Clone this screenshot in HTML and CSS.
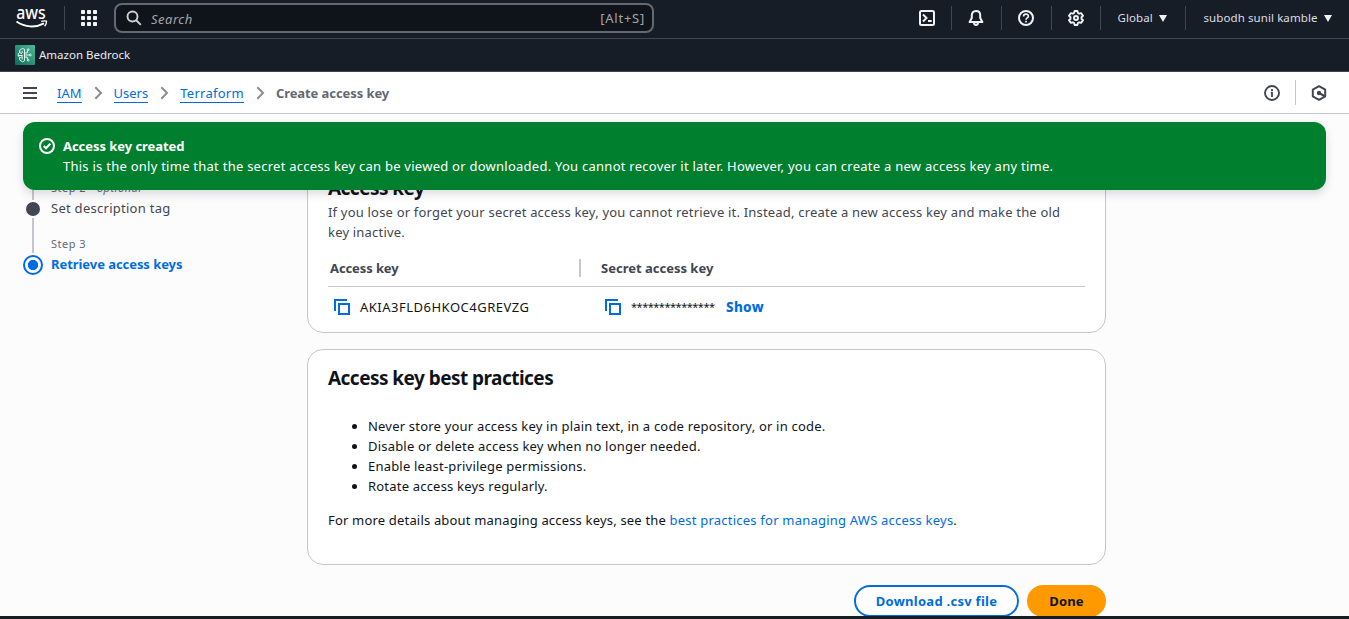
FILE: index.html
```html
<!DOCTYPE html>
<html lang="en">
<head>
<meta charset="utf-8">
<title>Create access key | IAM</title>
<link rel="stylesheet" href="styles.css">
</head>
<body>
<div class="app">
  <header class="topbar">
    <svg class="logo" width="32" height="28" viewBox="0 -8 32 28">
      <text x="0.3" y="11" class="logo-text" textLength="29.5" lengthAdjust="spacingAndGlyphs">aws</text>
      <path d="M.5 13.6c8.500 6.200 19.500 6.200 27.500 1.800" fill="none" stroke="#fff" stroke-width="1.800"/>
      <path d="M25.200 13.400q3.500-1 5.300-.2q.2 2.600-1.900 5" fill="none" stroke="#fff" stroke-width="1.400"/>
    </svg>
    <span class="sep sep-logo"></span>
    <svg class="grid-icon" width="16" height="16" viewBox="0 0 16 16" fill="#f3f3f7">
      <rect width="4" height="4" rx=".8"/><rect x="6" width="4" height="4" rx=".8"/><rect x="12" width="4" height="4" rx=".8"/>
      <rect y="6" width="4" height="4" rx=".8"/><rect x="6" y="6" width="4" height="4" rx=".8"/><rect x="12" y="6" width="4" height="4" rx=".8"/>
      <rect y="12" width="4" height="4" rx=".8"/><rect x="6" y="12" width="4" height="4" rx=".8"/><rect x="12" y="12" width="4" height="4" rx=".8"/>
    </svg>
    <div class="search">
      <svg width="16" height="16" viewBox="0 0 16 16" fill="none" stroke="#d0d0d6" stroke-width="1.900"><circle cx="6.500" cy="6.500" r="5"/><path d="m10 10 4.800 4.800"/></svg>
      <span class="search-hint">Search</span>
      <span class="search-key">[Alt+S]</span>
    </div>
    <div class="tools">
      <span class="tool tool-shell"><svg width="16" height="16" viewBox="0 0 16 16" fill="none" stroke="#f3f3f7" stroke-width="2"><rect x="1" y="1" width="14" height="14" rx="1.500"/><path d="m4 4.500 3.500 3.500L4 11.500M9 11h3.700"/></svg></span>
      <span class="tool tool-bell"><svg width="16" height="16" viewBox="0 0 16 16" fill="none" stroke="#f3f3f7" stroke-width="2" stroke-linejoin="round"><path d="M8 1C5.200 1 3.800 3 3.800 5.300V8L1.600 12h12.800L12.200 8V5.300C12.200 3 10.800 1 8 1ZM6 12.500c0 3.200 4 3.200 4 0"/></svg></span>
      <span class="tool tool-help"><svg width="16" height="16" viewBox="0 0 16 16" fill="none" stroke="#f3f3f7" stroke-width="2"><circle cx="8" cy="8" r="7"/><path d="M5.600 6.400C5.600 3.400 10.400 3.400 10.400 6.200 10.400 8 8 7.800 8 9.700M8 10.800v1.800" stroke-width="1.700"/></svg></span>
      <span class="tool tool-gear"><svg width="16" height="16" viewBox="0 0 16 16" fill="none" stroke="#f3f3f7" stroke-width="1.900" stroke-linejoin="round"><path d="M6.600 1h2.800l.5 2 1.200.7 2-.6 1.900 2.700L13.500 7.200v1.600l1.500 1.400-1.900 2.700-2-.6-1.200.7-.5 2H6.600l-.5-2-1.200-.7-2 .6L1 10.200l1.500-1.400V7.200L1 5.800l1.900-2.700 2 .6L6.100 3Z"/><circle cx="8" cy="8" r="2"/></svg></span>
      <span class="tool tool-region"><span class="t-region">Global</span><i class="caret"></i></span>
      <span class="tool tool-user"><span class="t-user">subodh sunil kamble</span><i class="caret"></i></span>
    </div>
  </header>
  <div class="favorites">
    <svg class="bedrock" width="20" height="20" viewBox="0 0 20 20">
      <defs><linearGradient id="teal" x1="0" y1="1" x2="1" y2="0"><stop stop-color="#0b6b58"/><stop offset="1" stop-color="#4fb99a"/></linearGradient></defs>
      <rect width="20" height="20" rx="1" fill="url(#teal)"/>
      <g fill="none" stroke="#e4f6ef" stroke-width="1"><path d="M9.500 4.200v11.600l-2 1-2.800-1.900v-2.500L3.200 11V8.800l1.500-1.200V5.300L7.300 3.500ZM4.800 7.600l2.200 1M3.500 10.500h4.200M7.200 6.300V8M5.100 13l2.100-1.500v3M9.500 10h5.300M9.500 8h2.800V5.500M9.500 12h2.800v2.500"/><circle cx="15.300" cy="10" r=".9"/><circle cx="13.200" cy="4.700" r=".9"/><circle cx="13.200" cy="15.200" r=".9"/></g>
    </svg>
    <span class="t-bedrock">Amazon Bedrock</span>
  </div>
  <nav class="crumbs">
    <svg class="menu" width="14" height="12" viewBox="0 0 14 12" fill="#424650"><path d="M0 0h14v2H0zM0 5h14v2H0zM0 10h14v2H0z"/></svg>
    <a class="c1">IAM</a>
    <svg class="chev" width="9" height="14" viewBox="0 0 9 14"><path d="m1.300 1.200 5.700 5.800-5.700 5.800"/></svg>
    <a class="c2">Users</a>
    <svg class="chev" width="9" height="14" viewBox="0 0 9 14"><path d="m1.300 1.200 5.700 5.800-5.700 5.800"/></svg>
    <a class="c3">Terraform</a>
    <svg class="chev" width="9" height="14" viewBox="0 0 9 14"><path d="m1.300 1.200 5.700 5.800-5.700 5.800"/></svg>
    <b class="c4">Create access key</b>
    <div class="crumb-tools">
      <svg width="16" height="16" viewBox="0 0 16 16" fill="none" stroke="#424650" stroke-width="1.900"><circle cx="8" cy="8" r="7"/><path d="M8 4v2M6.800 7.700H8V12" stroke-width="1.800"/></svg>
      <span class="crumb-sep"></span>
      <svg width="16" height="16" viewBox="0 0 16 16" fill="none" stroke="#424650" stroke-width="2"><path d="m8 1.200 6.200 3.500v6.600L8 14.800l-6.200-3.500V4.700Z" stroke-linejoin="round"/><path d="m8 8 5.500 3"/><circle cx="8" cy="8" r="1.200" fill="#424650"/></svg>
    </div>
  </nav>
  <main class="content">
    <aside class="steps">
      <div class="rail"><i class="line l-top"></i><i class="dot"></i><i class="line l-mid"></i><i class="dot-now"></i></div>
      <div class="step-list">
        <small class="s-opt">Step 2 - <em>optional</em></small>
        <span class="s-tag">Set description tag</span>
        <small class="s-three">Step 3</small>
        <b class="s-now">Retrieve access keys</b>
      </div>
    </aside>
    <div class="panels">
      <section class="card card-key">
        <h2 class="h-key">Access key</h2>
        <p class="desc"><span class="d1">If you lose or forget your secret access key, you cannot retrieve it. Instead, create a new access key and make the old</span><br><span class="d2">key inactive.</span></p>
        <div class="table">
          <div class="row head"><b class="th1">Access key</b><i class="col-sep"></i><b class="th2">Secret access key</b></div>
          <div class="row data">
            <svg class="copy" width="16" height="16" viewBox="0 0 16 16" fill="none" stroke="#006ce0" stroke-width="2"><path d="M1 12V1h12"/><path d="M5 5h10v10H5z"/></svg>
            <span class="td1">AKIA3FLD6HKOC4GREVZG</span>
            <svg class="copy copy-b" width="16" height="16" viewBox="0 0 16 16" fill="none" stroke="#006ce0" stroke-width="2"><path d="M1 12V1h12"/><path d="M5 5h10v10H5z"/></svg>
            <span class="td2">***************</span>
            <b class="show">Show</b>
          </div>
        </div>
      </section>
      <section class="card card-best">
        <h2 class="h-best">Access key best practices</h2>
        <ul class="tips">
          <li><span class="li1">Never store your access key in plain text, in a code repository, or in code.</span></li>
          <li><span class="li2">Disable or delete access key when no longer needed.</span></li>
          <li><span class="li3">Enable least-privilege permissions.</span></li>
          <li><span class="li4">Rotate access keys regularly.</span></li>
        </ul>
        <p class="more"><span class="m1">For more details about managing access keys, see the </span><a class="m2">best practices for managing AWS access keys</a>.</p>
      </section>
      <div class="actions"><span class="btn btn-csv">Download .csv file</span><span class="btn btn-done">Done</span></div>
    </div>
    <div class="flash">
      <svg width="16" height="16" viewBox="0 0 16 16" fill="none" stroke="#fff" stroke-width="2"><circle cx="8" cy="8" r="7"/><path d="m4.700 8 2.300 2.300 4.300-4.500"/></svg>
      <div class="flash-text"><b class="f1">Access key created</b><span class="f2">This is the only time that the secret access key can be viewed or downloaded. You cannot recover it later. However, you can create a new access key any time.</span></div>
    </div>
  </main>
  <footer class="bottom"></footer>
</div>
</body>
</html>
```
FILE: styles.css
```css
* { box-sizing: border-box; }
body { margin: 0; font: 13px/20px "Noto Sans", sans-serif; color: #0f141a; background: #fcfcfd; }
svg { flex: none; display: block; }
span, b, a, small, h2 { white-space: nowrap; }
.app { width: 1349px; height: 619px; display: flex; flex-direction: column; overflow: hidden; }
.topbar { height: 39px; flex: none; background: #161d26; border-bottom: 1px solid #424650; display: flex; align-items: flex-start; color: #dedee3; }
.logo { margin-left: 16px; overflow: visible; }
.logo-text { font: 500 18px "Noto Sans", sans-serif; fill: #fff; }
.sep { width: 1px; height: 24px; background: #424650; margin: 6px 0 0 16px; }
.grid-icon { margin: 10px 0 0 16px; }
.search { width: 540px; height: 30px; margin: 3px 0 0 17px; border: 2px solid #656871; border-radius: 8px; background: #0f141a; display: flex; align-items: center; padding: 0 7px 0 10px; }
.search-hint { margin-left: 9px; padding-top: 2px; font-style: italic; letter-spacing: .5px; color: #a4a4ad; }
.search-key { margin-left: auto; letter-spacing: .75px; color: #a4a4ad; }
.tools { margin-left: auto; display: flex; padding-top: 6px; }
.tool { height: 24px; display: flex; align-items: center; font-size: 11.5px; }
.tool + .tool { border-left: 1px solid #424650; }
.tool-shell { width: 32px; }
.tool-bell, .tool-help { width: 50px; padding-left: 16px; }
.tool-gear { width: 49px; padding-left: 16px; }
.tool-region { width: 85px; padding-left: 16.500px; }
.t-region { letter-spacing: .1px; }
.tool-user { width: 164px; padding-left: 17.500px; }
.t-user { letter-spacing: .09px; }
.caret { border: 4px solid transparent; border-top: 7px solid #f3f3f7; border-bottom: 0; margin-left: 6px; }
.favorites { height: 33px; flex: none; background: #161d26; border-bottom: 1px solid #424650; display: flex; align-items: center; padding-left: 15px; color: #ebebf0; font-size: 11.5px; }
.t-bedrock { margin-left: 4px; padding-bottom: 1px; }
.crumbs { height: 42px; flex: none; background: #fff; border-bottom: 1px solid #c6c6cd; display: flex; align-items: center; padding: 0 22px 0 23px; }
.menu { margin-right: 20px; }
.crumbs a { color: #006ce0; border-bottom: 1px solid #006ce0; line-height: 18px; padding-top: 2px; }
.c3 { letter-spacing: .27px; }
.chev { margin: 0 11px 0 12px; fill: none; stroke: #8c8c94; stroke-width: 2; }
.c4 { color: #656871; letter-spacing: -.08px; }
.crumb-tools { margin-left: auto; display: flex; align-items: center; }
.crumb-sep { width: 1px; height: 25px; margin: 0 15px; background: #c6c6cd; }
.content { position: relative; flex: 1; min-height: 0; overflow: hidden; display: flex; align-items: flex-start; padding: 54px 0 0 23px; }
.steps { display: flex; width: 284px; flex: none; }
.rail { width: 20px; margin-right: 8px; display: flex; flex-direction: column; align-items: center; }
.line { width: 2px; background: #c6c6cd; }
.l-top { height: 32px; }
.dot { width: 14px; height: 14px; margin: 2px 0; border-radius: 50%; background: #424650; }
.l-mid { height: 35px; }
.dot-now { width: 20px; height: 20px; margin-top: 2px; border: 2px solid #006ce0; border-radius: 50%; background: radial-gradient(circle, #006ce0 4.800px, transparent 5.400px); }
.step-list { display: flex; flex-direction: column; align-items: flex-start; padding-top: 11px; }
.step-list small { font-size: 11px; line-height: 18px; letter-spacing: .5px; color: #656871; }
.s-tag { color: #424650; letter-spacing: .27px; margin: 1px 0 17px; }
.s-now { color: #006ce0; letter-spacing: -.06px; margin-top: 1px; }
.panels { width: 799px; flex: none; }
.card { border: 1px solid #c6c6cd; border-radius: 16px; background: #fff; padding: 0 20px; }
.card-key { height: 165px; }
h2 { margin: 0; font-size: 19px; line-height: 24px; font-weight: 700; letter-spacing: -.54px; }
.h-key { padding-top: 7px; }
.desc { margin: 2px 0 0; color: #424650; letter-spacing: .195px; }
.table { margin-top: 8px; }
.row { display: flex; align-items: center; }
.head { height: 37px; border-bottom: 1px solid #c6c6cd; color: #424650; padding-left: 2px; }
.th1 { width: 249px; letter-spacing: -.1px; }
.col-sep { width: 2px; height: 18px; background: #c6c6cd; margin-right: 20px; }
.data { height: 40px; padding-left: 6px; }
.td1 { width: 245px; margin-left: 10px; letter-spacing: .5px; }
.td2 { width: 95px; margin-left: 10px; font-size: 11px; letter-spacing: -.49px; }
.show { color: #006ce0; font-size: 13.5px; font-weight: 800; letter-spacing: .3px; }
.card-best { margin-top: 16px; height: 216px; }
.h-best { padding-top: 16px; }
.tips { margin: 26px 0 14px; padding-left: 40px; letter-spacing: .2px; }
.more { margin: 0; letter-spacing: .18px; }
.more a { color: #006ce0; }
.m2 { letter-spacing: .22px; }
.actions { display: flex; justify-content: flex-end; gap: 8px; margin-top: 20px; }
.btn { height: 32px; border-radius: 16px; font-weight: 700; display: flex; align-items: center; justify-content: center; }
.btn-csv { width: 165px; border: 2px solid #006ce0; color: #006ce0; background: #fff; letter-spacing: .27px; }
.btn-done { width: 79px; background: #ff9900; color: #0f141a; letter-spacing: .15px; }
.flash { position: absolute; left: 23px; top: 8px; width: 1303px; height: 68px; border-radius: 12px; background: #00802f; color: #fff; display: flex; padding: 14px 16px; gap: 8px; box-shadow: 0 4px 10px rgba(0, 7, 22, .14); }
.flash svg { margin-top: 2px; }
.flash-text { display: flex; flex-direction: column; align-items: flex-start; }
.f1 { letter-spacing: -.05px; }
.f2 { letter-spacing: .252px; }
.bottom { height: 3px; flex: none; background: #161d26; }
```
